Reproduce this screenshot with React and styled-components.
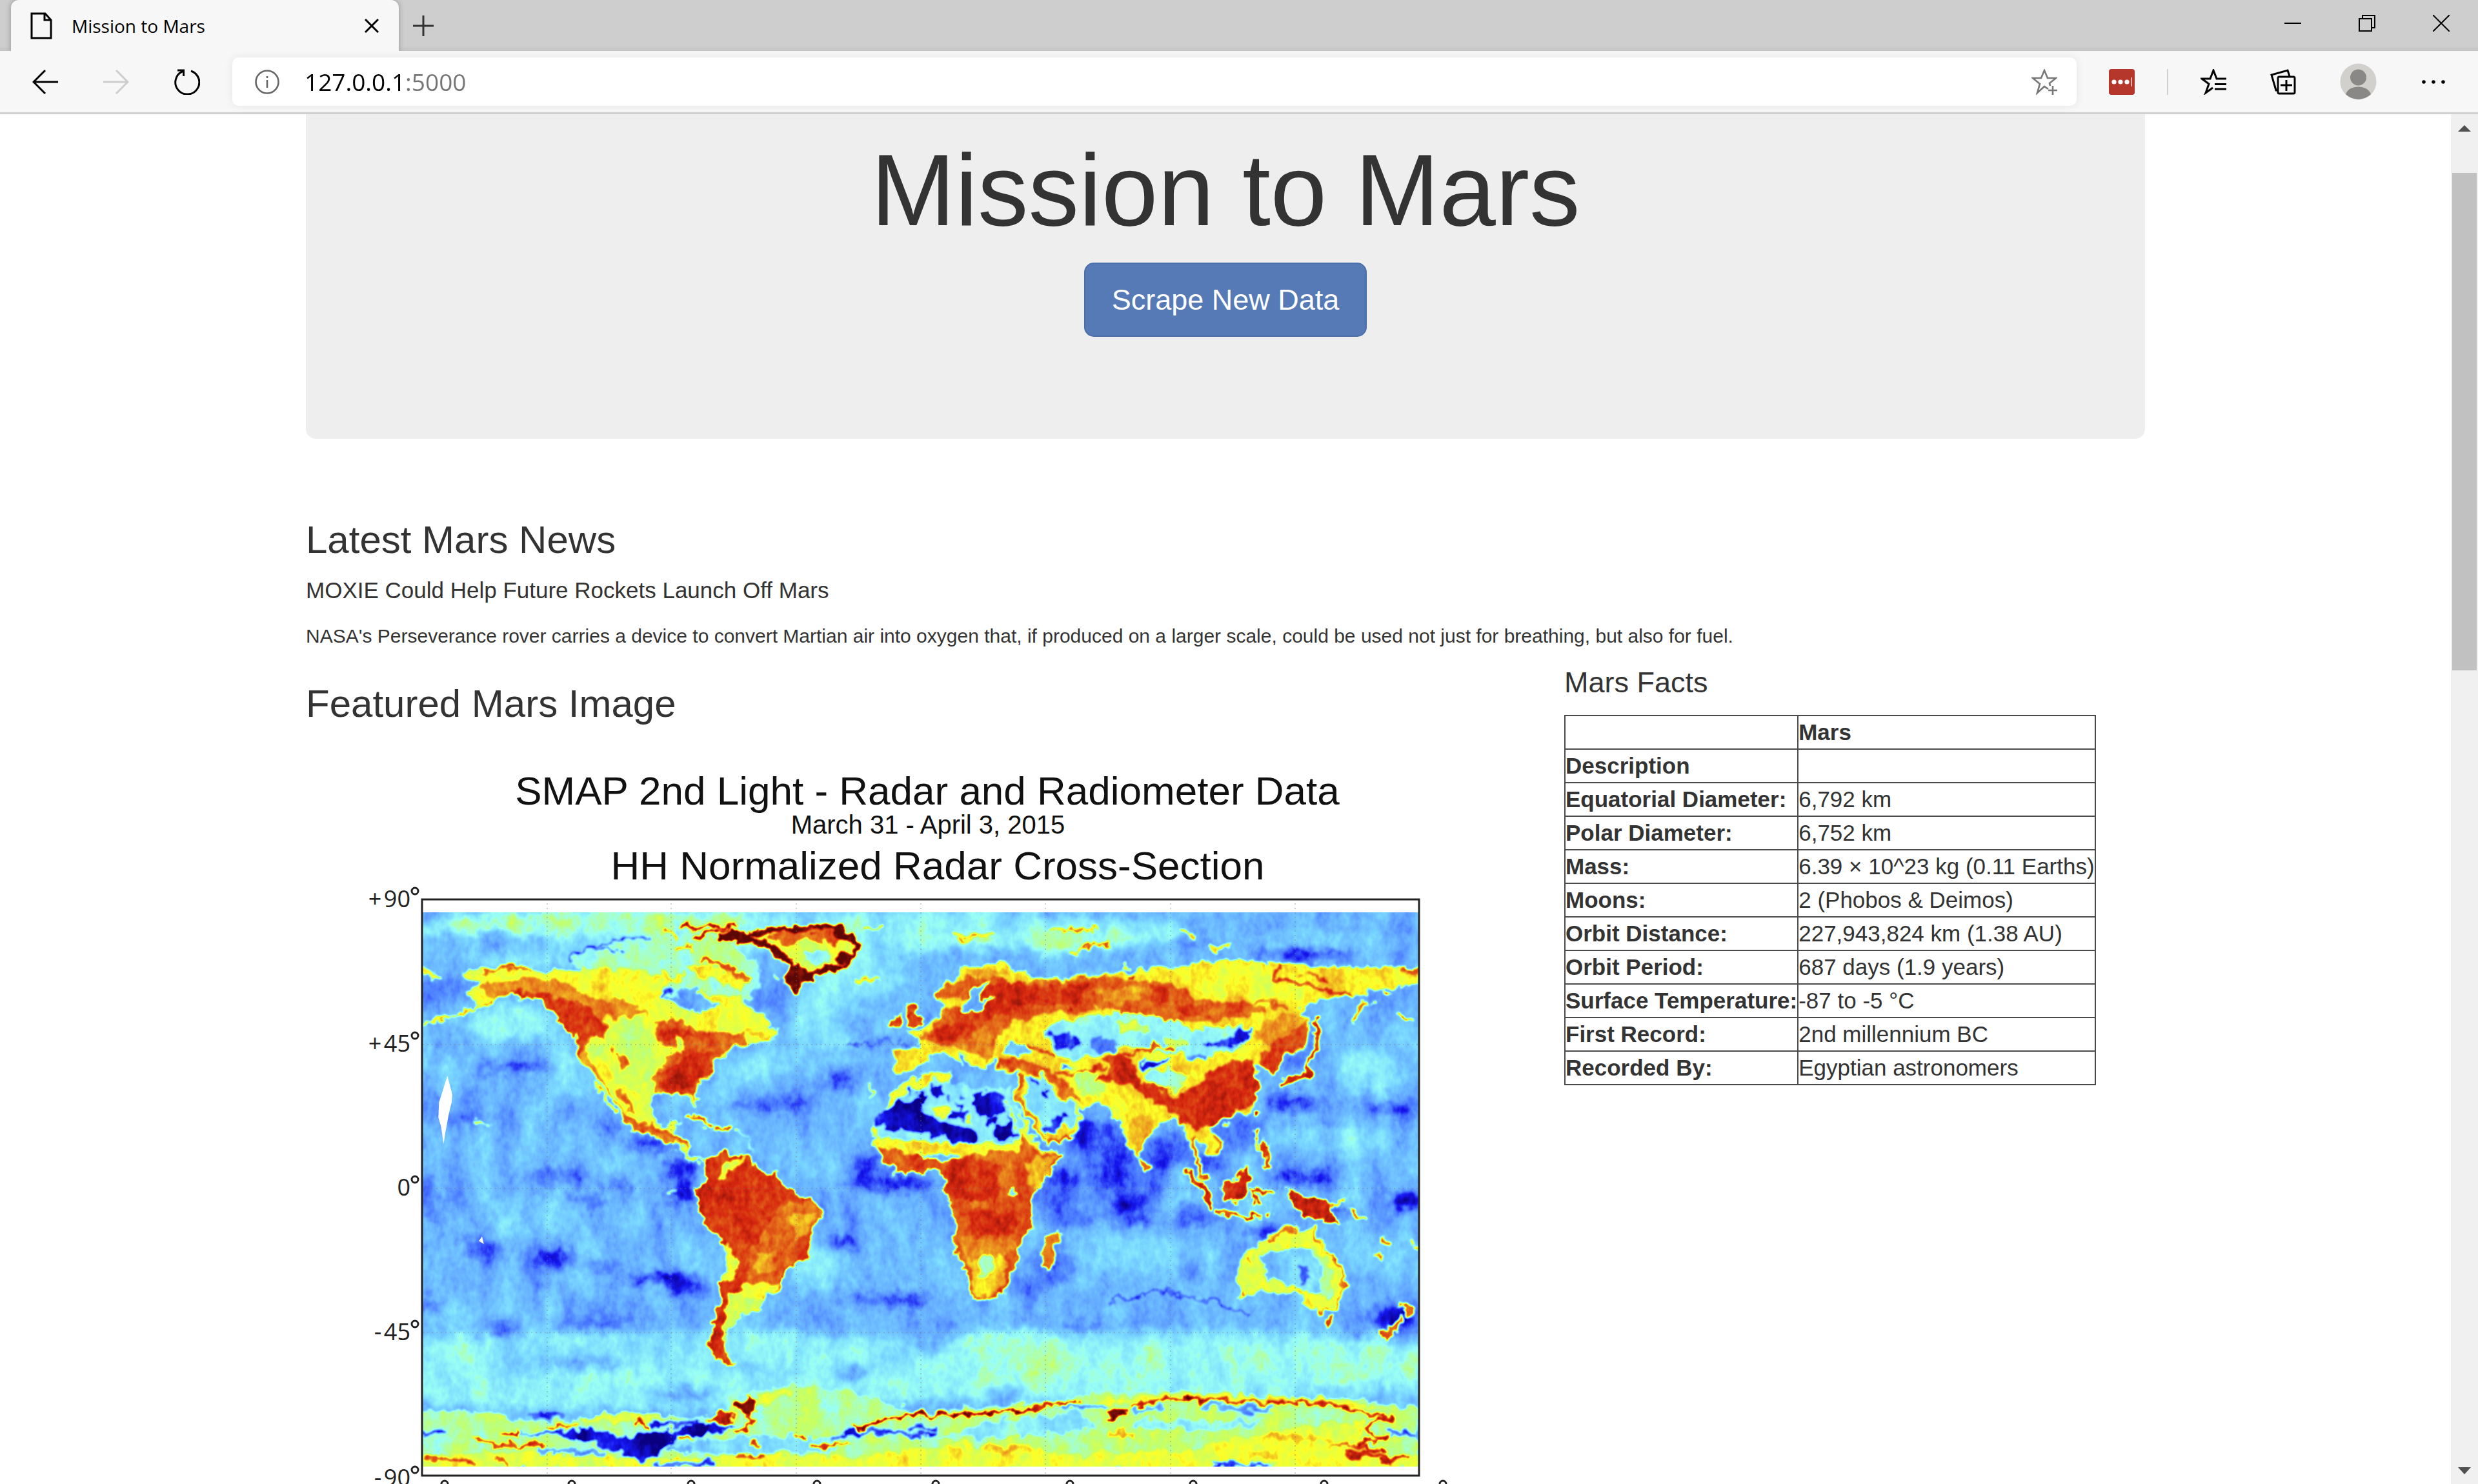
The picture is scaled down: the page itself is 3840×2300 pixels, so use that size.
import React from 'react';
import styled, { createGlobalStyle } from 'styled-components';

const GlobalStyle = createGlobalStyle`
  * { box-sizing: border-box; }
  html, body, #root { height: 100%; margin: 0; }
  body {
    font-family: "Liberation Sans", Arial, sans-serif;
    font-size: 35px;
    color: #333;
    background: #fff;
  }
  button { font: inherit; }
`;

/* ---------- browser window ---------- */

const Window = styled.div`
  display: flex;
  flex-direction: column;
  height: 100vh;
  overflow: hidden;
`;

const TabStrip = styled.div`
  display: flex;
  align-items: stretch;
  height: 79px;
  flex: none;
  padding-left: 17px;
  background: linear-gradient(#cecece 90%, #c2c2c2);
  font-family: "Open Sans", "Noto Sans", sans-serif;
`;

const Tab = styled.div`
  display: flex;
  align-items: center;
  gap: 30px;
  width: 601px;
  padding: 0 22px 0 30px;
  border-radius: 12px 12px 0 0;
  background: #f7f7f7;
  box-shadow: 0 0 8px rgba(0, 0, 0, 0.3);
  font-size: 28px;
  line-height: 40px;
  color: #000;
  clip-path: inset(0 -10px 0 -10px);
`;

const TabTitle = styled.span`
  flex: 1;
`;

const IconButton = styled.button`
  display: flex;
  align-items: center;
  justify-content: center;
  width: ${(p) => p.$width || 40}px;
  height: ${(p) => p.$height || 40}px;
  flex: none;
  padding: 0;
  border: 0;
  background: none;
  color: ${(p) => p.$color || '#000'};
`;

const NewTab = styled(IconButton)`
  align-self: center;
  margin-left: 18px;
`;

const WindowControls = styled.div`
  display: flex;
  margin-left: auto;
`;

const Toolbar = styled.div`
  display: flex;
  align-items: center;
  gap: 50px;
  height: 98px;
  flex: none;
  padding: 0 49px 0 50px;
  border-bottom: 3px solid #d0d0d0;
  background: #f7f7f7;
`;

const Navigation = styled.nav`
  display: flex;
  gap: 70px;
`;

const AddressBar = styled.div`
  display: flex;
  align-items: center;
  gap: 38px;
  flex: 1;
  height: 75px;
  padding: 0 30px 0 34px;
  border-radius: 10px;
  background: #fff;
  box-shadow: 0 0 14px rgba(0, 0, 0, 0.08);
`;

const AddressInput = styled.input`
  flex: 1;
  min-width: 0;
  height: 56px;
  padding: 0;
  border: 0;
  outline: 0;
  font-family: "Open Sans", "Noto Sans", sans-serif;
  font-size: 37px;
  color: transparent;
  background: linear-gradient(to right, #000 157px, #757575 157px);
  background-clip: text;
  -webkit-background-clip: text;
`;

const Divider = styled.span`
  width: 2px;
  height: 40px;
  background: #cfcfcf;
`;

const Tools = styled.div`
  display: flex;
  align-items: center;
  gap: 68px;
`;

const Viewport = styled.div`
  display: flex;
  flex: 1;
  min-height: 0;
`;

const Scrollbar = styled.div`
  display: flex;
  flex-direction: column;
  align-items: center;
  width: 42px;
  flex: none;
  padding: 2px;
  background: #f0f0f0;
`;

const Thumb = styled.div`
  width: 38px;
  height: calc(100% * 4 / 11);
  margin: 49px 0 auto;
  background: #c1c1c1;
`;

/* ---------- page ---------- */

const Page = styled.main`
  flex: 1;
  min-width: 0;
  overflow: hidden;
`;

const Container = styled.div`
  max-width: 2850px;
  margin: 0 auto;
`;

const Jumbotron = styled.header`
  display: flex;
  flex-direction: column;
  align-items: center;
  gap: 25px;
  margin-bottom: 124px;
  padding: 31px 150px 158px;
  border-radius: 0 0 15px 15px;
  background: #eee;
`;

const Title = styled.h1`
  margin: 0;
  font-size: 157px;
  line-height: 174px;
  font-weight: 400;
`;

const PrimaryButton = styled.button`
  padding: 25px 41px;
  border: 2px solid #4a6ea9;
  border-radius: 15px;
  background: #567ab5;
  color: #fff;
  font-size: 45px;
  line-height: 61px;
`;

const SectionTitle = styled.h2`
  margin: 0 0 25px;
  font-size: 60px;
  line-height: 66px;
  font-weight: 400;
`;

const NewsTitle = styled.h3`
  margin: 0 0 30px;
  font-size: 35px;
  line-height: 39px;
  font-weight: 400;
`;

const NewsText = styled.p`
  margin: 0;
  font-size: 30px;
  line-height: 43px;
`;

const Columns = styled.div`
  display: grid;
  grid-template-columns: 25fr 12fr;
  column-gap: 75px;
  align-items: start;
`;

const Feature = styled.section`
  padding-top: 51px;
`;

const Facts = styled.section`
  padding-top: 26px;
`;

const FactsTitle = styled.h2`
  margin: 0 0 25px;
  font-size: 45px;
  line-height: 50px;
  font-weight: 400;
`;

const FactsTable = styled.table`
  border-collapse: collapse;
  font-size: 35px;
  line-height: 50px;
  white-space: nowrap;

  th, td {
    height: 52px;
    padding: 0;
    border: 2px solid #4a4a4a;
    text-align: left;
  }
`;

const MapImage = styled.svg`
  display: block;
  width: 100%;
  height: auto;
  font-family: "Liberation Sans", Arial, sans-serif;
`;

/* ---------- icons ---------- */

const Icon = ({ w = 40, h = 40, sw = 3, children }) => (
  <svg width={w} height={h} viewBox={`0 0 ${w} ${h}`} fill="none" stroke="currentColor" strokeWidth={sw} aria-hidden="true">
    {children}
  </svg>
);

const FileIcon = () => (
  <Icon w={34} h={42}><path d="M2 2H23L32 12V40H2ZM22 2V12H32" /></Icon>
);
const CloseIcon = () => <Icon w={22} h={22}><path d="M1 1 21 21M21 1 1 21" /></Icon>;
const PlusIcon = () => <Icon w={34} h={34}><path d="M17 1V33M1 17H33" stroke="#333" /></Icon>;
const BackIcon = () => <Icon><path d="M20 2 2 20 20 38M2 20H40" /></Icon>;
const ForwardIcon = () => <Icon><path d="M20 2 38 20 20 38M38 20H0" /></Icon>;
const ReloadIcon = () => (
  <Icon><path d="M26 3A18.5 18.5 0 1 1 13 3.6M5 2H14.500V11" /></Icon>
);
const InfoIcon = () => (
  <Icon w={38} h={38} sw={2.6}><circle cx="19" cy="19" r="17.500" /><path d="M19 16V28M19 10V13" /></Icon>
);
const StarAddIcon = () => (
  <Icon sw={2.6}><path d="M26 31 20 27 9 37 13 23 2 14H15L20 2 25 14H38L28 22 29 26M33 26V40M26 33H40" /></Icon>
);
const PasswordIcon = () => (
  <svg width="40" height="40" viewBox="0 0 40 40" aria-hidden="true">
    <rect width="40" height="40" rx="4" fill="#b5362b" />
    <circle cx="8" cy="20" r="3.600" fill="#fff" /><circle cx="18" cy="20" r="3.600" fill="#fff" /><circle cx="28" cy="20" r="3.600" fill="#fff" />
    <path d="M35 13V27" stroke="#f0d5d2" strokeWidth="1.500" />
  </svg>
);
const FavoritesIcon = () => (
  <Icon><path d="M40 15H25L20 2 15 15H2L13 23 8 37 19 29M22 23.500H40M22 31H40" /></Icon>
);
const CollectionsIcon = () => (
  <Icon><path d="M12 33H9L2 9 27 2 30 11" /><rect x="12" y="12" width="26" height="26" rx="2" /><path d="M25 17V34M16 25H34" /></Icon>
);
const AvatarIcon = () => (
  <svg width="57" height="57" viewBox="0 0 57 57" aria-hidden="true">
    <circle cx="28.500" cy="28.500" r="28" fill="#d2d0cd" />
    <circle cx="28.500" cy="22" r="12.500" fill="#8a8886" />
    <path d="M9 48C12 40 20 36.500 28.500 36.500S45 40 48 48A28 28 0 0 1 9 48Z" fill="#8a8886" />
  </svg>
);
const MoreIcon = () => (
  <svg width="40" height="40" viewBox="0 0 40 40" aria-hidden="true">
    <circle cx="5" cy="20" r="2.800" /><circle cx="20" cy="20" r="2.800" /><circle cx="35" cy="20" r="2.800" />
  </svg>
);
const MinimizeIcon = () => <Icon w={26} h={26} sw={2}><path d="M0 13H26" /></Icon>;
const RestoreIcon = () => <Icon w={26} h={26} sw={2}><path d="M1 6H20V25H1ZM6 6V1H25V20H20" /></Icon>;
const WindowCloseIcon = () => <Icon w={26} h={26} sw={2}><path d="M0 0 26 26M26 0 0 26" /></Icon>;
const Arrow = ({ down }) => (
  <svg width="20" height="40" viewBox="0 0 20 40" fill="#505050" aria-hidden="true">
    <path d={down ? 'M0 16H20L10 27Z' : 'M0 25H20L10 15Z'} />
  </svg>
);

/* ---------- radar map ---------- */

/* Signal strength from 0 to 1 as a grey; the map filter turns it into colour. */
const level = (v) => {
  const c = Math.round(v * 255);
  return `rgb(${c},${c},${c})`;
};

/* Spots: [cx, cy, rx, ry, strength] */
const westSea = [
  [850, 1240, 900, 80, 0.42], [850, 1320, 900, 50, 0.47], [900, 110, 800, 60, 0.46],
  [700, 85, 480, 34, 0.56], [330, 135, 190, 22, 0.33], [480, 185, 170, 16, 0.46], [230, 270, 90, 40, 0.26],
  [1400, 180, 120, 110, 0.46], [1450, 100, 90, 40, 0.56], [1180, 290, 50, 30, 0.3], [1330, 330, 110, 90, 0.44],
  [430, 350, 120, 50, 0.48], [440, 465, 100, 14, 0.12], [620, 500, 50, 60, 0.44], [200, 400, 40, 70, 0.4],
  [190, 560, 50, 60, 0.24], [280, 605, 90, 10, 0.18], [1100, 470, 90, 40, 0.44], [1370, 500, 36, 26, 0.12],
  [1160, 565, 130, 12, 0.13], [720, 630, 24, 14, 0.13], [830, 668, 70, 14, 0.06], [910, 735, 40, 34, 0.08],
  [920, 800, 40, 26, 0.07], [720, 775, 26, 18, 0.08], [640, 820, 110, 10, 0.16], [560, 755, 80, 24, 0.2],
  [190, 810, 24, 60, 0.15], [1500, 772, 110, 24, 0.1], [1440, 730, 60, 22, 0.17], [560, 975, 70, 22, 0.12],
  [690, 995, 60, 12, 0.16], [855, 1025, 105, 14, 0.01], [930, 1050, 60, 20, 0.12], [350, 950, 50, 28, 0.2],
  [290, 920, 16, 12, 0.03], [1365, 932, 44, 20, 0.04], [1470, 1080, 90, 13, 0.14], [400, 1160, 34, 26, 0.1],
  [190, 1095, 26, 20, 0.14], [640, 1150, 110, 11, 0.16], [640, 1250, 130, 20, 0.29], [680, 1185, 140, 16, 0.47],
  [290, 1240, 120, 60, 0.5], [600, 1330, 430, 26, 0.47], [1180, 1210, 150, 50, 0.48], [1300, 1000, 60, 60, 0.42],
  [920, 1330, 100, 22, 0.28], [1420, 1270, 60, 26, 0.24], [230, 480, 30, 60, 0.44], [480, 860, 120, 60, 0.38],
];

const eastSea = [
  [740, 1240, 850, 80, 0.46], [740, 1310, 850, 40, 0.48], [300, 110, 600, 60, 0.45],
  [200, 90, 180, 34, 0.46], [520, 128, 280, 22, 0.53], [640, 64, 220, 7, 0.28], [1050, 85, 200, 14, 0.3],
  [1350, 100, 160, 24, 0.3], [1190, 168, 120, 14, 0.06], [900, 140, 60, 10, 0.22], [1300, 130, 130, 14, 0.38],
  [400, 165, 150, 13, 0.32], [60, 230, 80, 60, 0.46], [120, 404, 60, 8, 0.08], [30, 360, 40, 40, 0.3],
  [1360, 480, 90, 60, 0.44], [1160, 560, 54, 26, 0.06], [1410, 578, 70, 14, 0.13], [1170, 450, 34, 24, 0.22],
  [1270, 660, 160, 36, 0.41], [660, 760, 190, 120, 0.22], [650, 650, 70, 46, 0.12], [700, 740, 28, 60, 0],
  [590, 760, 30, 28, 0.02], [740, 830, 46, 24, 0.05], [840, 690, 50, 50, 0.1], [765, 870, 18, 26, 0.05],
  [900, 860, 46, 34, 0.1], [620, 870, 60, 20, 0.15], [1020, 640, 60, 50, 0.18], [940, 720, 24, 26, 0.06],
  [1190, 760, 80, 20, 0.1], [1450, 820, 40, 20, 0.02], [1280, 850, 40, 16, 0.05], [130, 770, 120, 20, 0.1],
  [1090, 900, 50, 18, 0.06], [760, 960, 160, 50, 0.4], [560, 1000, 50, 40, 0.2], [1340, 950, 60, 60, 0.38],
  [170, 1085, 60, 16, 0.1], [480, 1050, 60, 26, 0.24], [620, 1160, 100, 13, 0.22], [1420, 1130, 60, 36, 0.12],
  [250, 1180, 60, 60, 0.26], [40, 1270, 30, 28, 0.18], [420, 1240, 170, 80, 0.52], [900, 1250, 330, 60, 0.49],
  [1300, 1250, 220, 60, 0.51], [430, 1330, 60, 14, 0.3], [1320, 1320, 160, 10, 0.35],
];

/* Land outlines: [strength, path, stroke width]; with a width the path is drawn as a line. */
const westLand = [
  [0.54, 'M590 190 640 150 740 130 860 112 960 120 1040 140 1130 190 1145 240 1100 300 850 280 640 230Z'],
  [0.68, 'M310 265 335 240 285 214 420 203 520 212 640 215 700 200 820 215 880 230 860 280 900 300 980 320 1040 290 1090 270 1105 300 1150 335 1190 380 1150 395 1060 425 1010 450 990 490 950 530 962 570 945 570 930 535 840 540 825 580 835 610 870 628 885 605 908 605 905 650 935 660 935 695 965 712 985 712 960 726 920 700 900 670 830 650 765 620 740 580 725 545 690 500 640 460 615 430 612 380 545 330 505 290 440 272 380 290 340 300 310 290Z'],
  [0.78, 'M175 352 270 332 350 300 400 280', 7],
  [0.8, 'M330 250 440 235 570 238 620 260 660 285 740 290 820 330 770 335 700 335 700 390 655 385 640 425 690 500 740 575 780 610 840 630 905 650 935 665 940 700 900 670 830 650 765 620 690 520 615 430 612 380 545 330 500 285 440 268 380 290Z'],
  [0.89, 'M400 272 500 268 600 290 640 300 680 330 700 390 650 385 625 440 612 380 545 330 500 285Z'],
  [0.62, 'M700 345 790 335 835 390 835 480 790 540 730 500 690 450 650 420 700 400Z'],
  [0.85, 'M830 350 910 338 960 370 1080 378 1110 400 1030 430 1000 470 950 530 962 570 942 540 840 536 830 490 870 450 890 420 850 400Z'],
  [0.9, 'M850 480 900 460 940 430 1010 430 990 480 950 520 850 525ZM850 370 930 365 950 385 870 400Z'],
  [0.64, 'M890 390 930 400 920 430 895 420Z'],
  [0.85, 'M735 435 765 440 765 480 740 480ZM710 410 725 415 722 440Z'],
  [0.84, 'M740 530 775 590', 12],
  [0.86, 'M760 600 800 628 870 640 930 665', 12],
  [0.78, 'M665 505 728 595', 8],
  [0.3, 'M900 262 960 265 990 290 960 320 915 305Z'],
  [0.12, 'M855 285 890 257', 10],
  [0.72, 'M920 200 1000 195 1100 240 1080 260 980 230ZM830 225 930 220 920 245ZM960 270 1060 280 1050 310ZM690 215 760 225'],
  [0.86, 'M975 180 1030 195 1060 218 1105 235', 12],
  [0.83, 'M890 150 950 155M860 110 895 122', 9],
  [0.15, 'M590 185 630 155 740 130 820 125M660 152 740 158', 7],
  [0.84, 'M350 218 430 205 490 206', 8],
  [0.74, 'M172 212 230 235M1410 238 1480 238M1090 375 1180 385', 12],
  [0.96, 'M910 100 1070 93M950 125 1060 103', 10],
  [0.64, 'M1020 125 1130 105 1280 90 1380 95 1415 120 1400 200 1290 230 1250 272 1215 250 1215 200 1160 150Z'],
  [0.48, 'M1260 170 1330 155 1335 200 1300 200Z'],
  [0.84, 'M1150 125 1270 95 1380 100 1360 150 1290 130 1220 145Z'],
  [1, 'M1035 126 1130 110 1280 96 1370 98 1400 120 1415 150 1385 195 1330 210 1290 225 1240 262 1235 225 1225 190 1165 148 1110 128Z', 16],
  [1, 'M1215 200 1250 190 1290 222 1245 275 1220 250ZM1340 98 1412 110 1400 140 1370 130ZM1350 170 1410 160 1390 205Z'],
  [0.76, 'M1440 100 1490 98M1180 220 1200 240', 9],
  [0.84, 'M928 596 970 602 1008 618M1012 628 1050 630M975 632 985 632M1065 632 1080 634', 9],
  [0.58, 'M1085 632 1105 645 1115 690', 4],
  [0.7, 'M330 602 345 606 370 625M870 795 890 795M1455 512 1460 545', 7],
  [0.89, 'M985 710 1045 685 1060 700 1110 705 1140 738 1190 745 1205 790 1290 815 1322 850 1290 900 1275 970 1220 1000 1190 1060 1150 1080 1140 1110 1090 1115 1075 1140 1045 1160 1040 1200 1035 1225 1075 1250 1040 1255 1005 1235 998 1190 1020 1120 1040 1030 1045 940 1000 905 975 860 958 820 960 790 985 760Z'],
  [0.84, 'M1200 830 1290 825 1318 850 1290 900 1272 965 1215 995 1190 1040 1100 1040 1110 960 1150 900Z'],
  [0.77, 'M1225 860 1300 850 1280 900 1240 920ZM1130 960 1190 950 1180 1000 1130 1010Z'],
  [0.66, 'M1015 760 1040 720 1100 708 1080 730 1050 740 1030 765ZM1110 750 1130 765'],
  [0.6, 'M1060 1060 1150 1075 1140 1105 1090 1115 1075 1140 1045 1160 1040 1210 1030 1180 1045 1100Z'],
  [0.68, 'M1045 930 1070 960 1075 1010 1042 1040ZM1085 1040 1190 1040 1180 1070 1090 1080Z'],
  [0.89, 'M1035 1040 1022 1120 1008 1190 1012 1232 1040 1248 1075 1250', 13],
  [0.56, 'M170 1375 300 1372 430 1398 600 1400 760 1382 860 1385 960 1395 1060 1370 1080 1340 1200 1308 1400 1325 1568 1372V1530H170Z'],
  [0.67, 'M170 1495 500 1480 800 1500 1200 1490 1568 1500V1530H170ZM660 1385 850 1382 880 1398 620 1405ZM1100 1345 1210 1312 1240 1322 1130 1370Z'],
  [0.42, 'M850 1460 1100 1445 1400 1440 1568 1450 1400 1480 1000 1490Z'],
  [0.06, 'M450 1436 620 1424 780 1440 960 1418 1080 1408 1000 1436 900 1450 850 1490 800 1518 740 1485 620 1450Z'],
  [0.14, 'M172 1430 240 1434M470 1387 580 1388M1340 1446 1450 1438 1568 1434M820 1410 960 1412M840 1518 1010 1512', 13],
  [0.28, 'M500 1478 700 1490M880 1475 950 1480', 12],
  [0.88, 'M320 1448 400 1465 520 1465M175 1502 320 1508M380 1503 420 1515M1060 1494 1150 1494M1280 1468 1410 1464M1240 1448 1270 1450', 10],
  [0.86, 'M530 1420 620 1412M900 1448 940 1450M1110 1460 1140 1462', 8],
  [0.95, 'M405 1440 455 1435M785 1400 820 1418M790 1418 810 1402', 9],
  [0.92, 'M985 1405 1020 1375 1075 1385 1050 1408Z'],
  [1, 'M1065 1360 1105 1334 1126 1350 1120 1382 1092 1378Z'],
  [0.92, 'M1110 1380 1112 1415 1070 1432', 12],
  [0.97, 'M1410 1426 1460 1410 1500 1394 1568 1388', 9],
];

const eastLand = [
  [0.72, 'M140 470 145 422 200 420 205 390 180 380 225 355 265 335 270 300 250 290 245 265 290 235 320 205 410 190 470 215 500 235 650 222 740 218 840 200 1000 183 1110 190 1250 200 1484 210 1484 245 1400 262 1320 278 1220 290 1180 320 1210 345 1190 415 1120 450 1115 490 1080 460 1045 445 1060 500 1070 550 1050 590 1000 600 950 622 980 660 975 700 950 706 925 675 908 655 940 760 925 765 905 700 882 620 850 600 810 620 780 660 765 715 735 670 725 600 700 605 680 570 610 565 625 600 600 640 530 675 510 650 460 560 450 530 465 480 400 475 395 445 370 475 340 460 300 420 320 465 290 440 240 425 205 470 150 478Z'],
  [0.84, 'M205 390 260 340 270 312 330 315 350 285 250 285 245 268 320 228 390 228 440 245 640 228 780 240 850 245 920 290 1050 298 1100 320 980 345 870 350 800 330 700 312 560 322 450 345 400 390 398 420 380 460 330 420 260 410Z'],
  [0.885, 'M380 250 430 240 520 255 640 245 620 300 480 305 400 330 340 370 350 400 260 400 230 380 330 330ZM790 250 850 262 840 300 800 290ZM860 300 940 305 960 335 880 330Z'],
  [0.78, 'M650 260 770 255 780 290 700 300ZM330 215 400 205 440 225 380 235Z'],
  [0.3, 'M338 268 380 240 362 285 400 288 345 318 310 322Z'],
  [0.69, 'M860 205 1000 190 1110 200 1200 240 1180 290 960 280 880 250Z'],
  [0.79, 'M1090 340 1180 320 1200 345 1150 400 1100 420 1060 380Z'],
  [0.85, 'M980 330 1030 305 1080 290 1140 310', 8],
  [0.88, 'M1122 195 1112 235 1180 246 1250 265 1320 275M1190 215 1250 240M1395 265 1410 280M1440 215 1484 216', 10],
  [0.48, 'M520 370 620 330 740 320 860 345 900 370 1030 360 1050 400 960 440 820 430 720 410 640 440 560 440Z'],
  [0.64, 'M700 350 780 345 800 370 720 375ZM830 390 880 385 900 410 850 415Z'],
  [0.13, 'M530 380 590 375 620 410 600 430 560 415ZM935 405 990 390 1050 362 1048 395 1010 412 950 415ZM765 458 840 445 815 468 775 470ZM560 460 595 462 580 475Z'],
  [0.25, 'M640 390 720 400 700 430 650 425ZM890 430 940 435 925 450 890 445Z'],
  [0.36, 'M410 430 440 400 495 425 450 438Z'],
  [0.85, 'M400 450 460 440 500 455 560 490 620 560 580 550 530 490 470 475 400 470Z'],
  [0.88, 'M470 410 520 425 550 440M700 440 800 415 860 420M560 485 680 470', 10],
  [0.6, 'M600 480 660 480 680 540 620 540Z'],
  [0.895, 'M655 500 690 475 680 450 720 432 745 450 760 490 850 545 900 525 960 470 1060 438 1072 550 1000 600 940 625 905 640 870 600 835 570 780 545 740 510 700 510Z'],
  [0.5, 'M780 480 850 475 895 490 860 530 800 520Z'],
  [0.77, 'M730 590 810 600 770 700 745 660Z'],
  [0.87, 'M1075 455 1120 385 1170 370 1205 340 1190 410 1130 440 1125 490 1105 480Z'],
  [0.9, 'M1222 335 1222 420 1205 440 1202 488 1140 500 1135 518', 13],
  [0.96, 'M1072 578 1066 596M1012 592 1018 590M1133 510 1135 518', 10],
  [0.86, 'M905 650 912 700 938 760M958 640 975 690M535 672 600 645M468 490 458 525', 10],
  [0.82, 'M460 540 520 655M1320 350 1330 310 1360 290M985 620 990 628', 13],
  [0.9, 'M888 742 930 790 960 838', 17],
  [0.88, 'M960 848 1010 855 1085 865M1055 790 1110 795M1060 830 1065 800 1080 830M1068 632 1072 680M1085 660 1100 730 1080 725M1100 860 1110 855', 10],
  [0.91, 'M978 782 1048 733 1042 815 1010 824 981 807Z'],
  [0.91, 'M1140 793 1180 801 1250 820 1256 850 1280 878 1213 868 1180 854 1164 824Z'],
  [0.82, 'M1255 836 1295 822M1305 840 1355 875', 9],
  [0.82, 'M775 710 788 735M1385 910 1402 940M1375 960 1390 972M1465 935 1478 940', 13],
  [0.87, 'M175 300 192 298 219 350 178 364 183 330ZM134 334 164 322 162 354 134 354Z'],
  [0.95, 'M190 320 200 322M725 320 732 324M745 230 755 231M585 306 590 307M1430 325 1460 342', 9],
  [0.7, 'M140 530 190 495 280 480 285 500 330 540 440 530 470 600 520 690 570 685 540 750 495 800 300 700 100 690 90 620Z'],
  [0.46, 'M110 590 160 545 250 500 340 520 440 520 470 620 460 665 200 665 95 650Z'],
  [0.04, 'M100 590 160 560 215 545 220 590 250 610 240 635 140 635 95 620ZM240 510 270 520 260 545 240 540ZM340 560 350 535 390 528 420 550 420 590 380 600ZM235 605 300 620 355 640 350 670 280 660 230 640ZM400 620 440 610 460 650 400 655ZM300 560 320 570 310 590ZM200 530 225 540 205 550ZM280 580 330 590 320 605 280 600ZM370 600 400 600 400 620 375 622Z'],
  [0.13, 'M270 540 285 550 275 562ZM430 590 445 600 436 612ZM180 525 195 520 190 540ZM320 530 330 545 318 550Z'],
  [0.68, 'M240 570 290 575 280 600 250 600ZM325 600 345 600 340 620M420 545 450 600 460 640'],
  [0.85, 'M85 672 180 690 270 715 390 690 460 690 470 640 515 700 570 688 540 750 495 800 490 900 460 950 455 990 430 1050 400 1078 340 1080 320 1000 300 950 300 880 275 800 270 750 240 740 150 747 115 720Z'],
  [0.89, 'M275 725 340 705 415 730 410 800 400 830 300 820 278 800ZM320 860 400 850 470 870 440 915 340 905Z'],
  [0.75, 'M480 720 555 695 530 760 495 790ZM330 970 400 960 430 985 420 1040 390 1070 345 1070Z'],
  [0.72, 'M85 664 200 672 300 680 460 672', 12],
  [0.81, 'M310 920 450 920 455 950 400 965 320 980ZM330 820 390 815 395 840 340 845Z'],
  [0.56, 'M365 965 390 960 395 1010 360 1020Z'],
  [0.4, 'M435 795 450 798', 9],
  [0.84, 'M516 950 562 893 550 992 524 1002Z'],
  [0.44, 'M475 490 520 490 560 540 590 560 615 600 560 640 530 640 480 560Z'],
  [0.06, 'M530 620 560 590 590 595 575 630 530 645ZM490 490 505 510 495 520ZM520 530 545 535 540 550Z'],
  [0.68, 'M1070 942 1100 908 1150 885 1190 905 1215 882 1245 950 1292 1005 1292 1060 1270 1112 1210 1108 1170 1070 1100 1060 1030 1080 1015 1000 1030 965Z'],
  [0.38, 'M1075 960 1160 945 1220 960 1250 1010 1235 1070 1190 1060 1140 1030 1095 1035 1090 990Z'],
  [0.1, 'M1172 985 1200 990 1212 1030 1185 1045Z'],
  [0.56, 'M1200 940 1250 970 1265 1060 1235 1080 1230 1000Z'],
  [0.83, 'M1095 925 1150 900 1175 895M1216 885 1225 935M1250 955 1290 1005 1290 1060 1265 1108 1225 1110M1040 975 1040 990M1030 1060 1040 1078', 9],
  [0.87, 'M1236 1130 1260 1130 1250 1154ZM1434 1078 1476 1112 1445 1130ZM1432 1126 1448 1140 1402 1186 1382 1174Z'],
  [0.17, 'M690 1085 740 1080 840 1055 900 1078 980 1088 1040 1115', 9],
  [0.15, 'M20 406 120 402 180 408', 6],
  [0.8, 'M290 118 400 115M305 130 340 128M530 106 660 104M870 106 910 118', 8],
  [0.84, 'M610 160 650 148 690 142', 8],
  [0.74, 'M585 175 605 160M725 185 732 210M40 238 110 238M940 148 1000 152', 11],
  [0.58, 'M0 1330 120 1385 560 1352 600 1335 880 1322 1100 1338 1300 1342 1484 1368V1530H0Z'],
  [0.68, 'M860 1480 1000 1450 1110 1430 1230 1410 1340 1400 1340 1480 1484 1500V1530H0V1500L300 1465 480 1465 560 1490ZM620 1350 900 1325 1100 1338 1300 1345 1400 1372 1100 1355Z'],
  [0.45, 'M400 1400 620 1380 660 1420 500 1440 250 1450ZM750 1400 1100 1400 1000 1425 760 1425Z'],
  [0.14, 'M0 1436 100 1430 250 1438M180 1415 250 1422M1400 1432 1484 1434M960 1520 1100 1518', 12],
  [0.27, 'M570 1365 680 1362M750 1375 830 1368M930 1362 1110 1372M1020 1378 1060 1385', 11],
  [0.75, 'M370 1475 490 1480M690 1435 760 1440M1090 1440 1260 1450M1060 1490 1120 1490', 14],
  [1, 'M40 1422 90 1412 120 1394 210 1386 330 1382 450 1376 490 1372', 9],
  [0.92, 'M490 1372 560 1356 610 1348M740 1368 800 1352 880 1345 930 1348 1100 1354 1220 1354 1290 1366 1350 1385', 9],
  [1, 'M675 1385 705 1370 740 1372 720 1388 695 1412ZM880 1335 915 1338 920 1350 880 1348Z'],
  [0.93, 'M1350 1385 1412 1394 1360 1412 1345 1430 1390 1446 1310 1468 1400 1480 1300 1490 1450 1500 1380 1508', 9],
  [0.87, 'M1250 1470 1340 1468M0 1468 30 1462', 8],
];

const Spot = ({ spot: [cx, cy, rx, ry, v] }) => (
  <ellipse cx={cx} cy={cy} rx={rx} ry={ry} fill={level(v)} />
);

const Land = ({ shape: [v, d, width] }) =>
  width ? (
    <path d={d} fill="none" stroke={level(v)} strokeWidth={width} strokeLinejoin="round" />
  ) : (
    <path d={d} fill={level(v)} />
  );

const WEST = 'translate(560 1380) scale(.5421 .5867)';
const EAST = 'translate(1300 1380) scale(.6059 .5867)';
const latitudes = [['+\u200a90', 1402], ['+\u200a45', 1626], ['0', 1849], ['-\u200a45', 2073], ['-\u200a90', 2299]];
const longitudes = [689, 886, 1071, 1266, 1450, 1658, 1849, 2052, 2236];
const meridians = [848, 1040, 1234, 1427, 1620, 1814, 2007];

const RadarMap = () => (
  <MapImage viewBox="474 1149 1875 1230" role="img" aria-label="SMAP radar map">
    <defs>
      <clipPath id="map-area"><rect x="655" y="1414" width="1543" height="859" /></clipPath>
      <filter id="haze" x="-20%" y="-20%" width="140%" height="140%"><feGaussianBlur stdDeviation="13 7" /></filter>
      <filter id="jet" filterUnits="userSpaceOnUse" x="640" y="1400" width="1580" height="890" colorInterpolationFilters="sRGB">
        <feTurbulence type="fractalNoise" baseFrequency="0.055" numOctaves="4" seed="8" result="edge" />
        <feDisplacementMap in="SourceGraphic" in2="edge" scale="24" xChannelSelector="R" yChannelSelector="G" result="rough" />
        <feGaussianBlur in="rough" stdDeviation="1.500" result="field" />
        <feTurbulence type="fractalNoise" baseFrequency="0.026 0.012" numOctaves="5" seed="21" />
        <feColorMatrix values="1 0 0 0 0  1 0 0 0 0  1 0 0 0 0  0 0 0 0 1" result="swell" />
        <feTurbulence type="fractalNoise" baseFrequency="0.110 0.080" numOctaves="2" seed="5" />
        <feColorMatrix values="1 0 0 0 0  1 0 0 0 0  1 0 0 0 0  0 0 0 0 1" result="grain" />
        <feComposite in="field" in2="swell" operator="arithmetic" k1="-0.260" k2="1.130" k3="0.360" k4="-0.180" result="wavy" />
        <feComposite in="wavy" in2="grain" operator="arithmetic" k2="1" k3="0.100" k4="-0.050" />
        <feComponentTransfer>
          <feFuncR type="table" tableValues=".04 .08 .28 .4 .48 .6 .76 .99 .92 .84 .36" />
          <feFuncG type="table" tableValues="0 .08 .46 .68 .85 1 1 1 .56 .15 .03" />
          <feFuncB type="table" tableValues=".5 .93 1 1 1 .96 .42 .15 .12 .06 .02" />
          <feFuncA type="linear" slope="1" />
        </feComponentTransfer>
      </filter>
    </defs>

    <g textAnchor="middle" fill="#111">
      <text x="1437" y="1247" fontSize="62">SMAP 2nd Light - Radar and Radiometer Data</text>
      <text x="1438" y="1292" fontSize="40">March 31 - April 3, 2015</text>
      <text x="1453" y="1363" fontSize="62">HH Normalized Radar Cross-Section</text>
    </g>

    <g clipPath="url(#map-area)">
      <g filter="url(#jet)">
        <rect x="600" y="1360" width="1640" height="960" fill={level(0.33)} />
        <g filter="url(#haze)">
          <g transform={WEST}>{westSea.map((s, i) => <Spot key={i} spot={s} />)}</g>
          <g transform={EAST}>{eastSea.map((s, i) => <Spot key={i} spot={s} />)}</g>
        </g>
        <g transform={WEST}>{westLand.map((s, i) => <Land key={i} shape={s} />)}</g>
        <g transform={EAST}>{eastLand.map((s, i) => <Land key={i} shape={s} />)}</g>
      </g>
      <g transform={WEST} fill="#fff">
        <path d="M246 490 260 540 258 560 250 590 240 640 235 670 228 625 220 600 222 560ZM345 914 350 934 336 926Z" />
      </g>
    </g>

    <g stroke="#777" strokeOpacity="0.45" strokeDasharray="2 5" strokeWidth="1.500">
      {meridians.map((x) => <path key={x} d={`M${x} 1400V2286`} />)}
      <path d="M655 1619H2198M655 1842H2198M655 2065H2198" />
    </g>
    <rect x="654" y="1394" width="1545" height="893" fill="none" stroke="#222" strokeWidth="3" />

    <g fill="#222" fontFamily="'Open Sans', 'Noto Sans', sans-serif" fontSize="36" textAnchor="end">
      {latitudes.map(([label, y]) => <text key={label} x="636" y={y + 4}>{label}</text>)}
    </g>
    <g fill="none" stroke="#222" strokeWidth="3">
      {latitudes.map(([label, y]) => <circle key={label} cx="643" cy={y - 21} r="5" />)}
      {longitudes.map((x) => <circle key={x} cx={x} cy="2300" r="5" />)}
    </g>
  </MapImage>
);

/* ---------- content ---------- */

const facts = [
  ['Equatorial Diameter:', '6,792 km'],
  ['Polar Diameter:', '6,752 km'],
  ['Mass:', '6.39 × 10^23 kg (0.11 Earths)'],
  ['Moons:', '2 (Phobos & Deimos)'],
  ['Orbit Distance:', '227,943,824 km (1.38 AU)'],
  ['Orbit Period:', '687 days (1.9 years)'],
  ['Surface Temperature:', '-87 to -5 °C'],
  ['First Record:', '2nd millennium BC'],
  ['Recorded By:', 'Egyptian astronomers'],
];

export default function App() {
  return (
    <Window>
      <GlobalStyle />
      <TabStrip>
        <Tab>
          <FileIcon />
          <TabTitle>Mission to Mars</TabTitle>
          <IconButton aria-label="Close tab"><CloseIcon /></IconButton>
        </Tab>
        <NewTab aria-label="New tab"><PlusIcon /></NewTab>
        <WindowControls>
          <IconButton $width={115} $height={71} aria-label="Minimize"><MinimizeIcon /></IconButton>
          <IconButton $width={115} $height={71} aria-label="Restore"><RestoreIcon /></IconButton>
          <IconButton $width={115} $height={71} aria-label="Close window"><WindowCloseIcon /></IconButton>
        </WindowControls>
      </TabStrip>

      <Toolbar>
        <Navigation aria-label="History">
          <IconButton aria-label="Back"><BackIcon /></IconButton>
          <IconButton $color="#cdcdcd" aria-label="Forward"><ForwardIcon /></IconButton>
          <IconButton aria-label="Refresh"><ReloadIcon /></IconButton>
        </Navigation>
        <AddressBar>
          <IconButton $color="#666" aria-label="Site information"><InfoIcon /></IconButton>
          <AddressInput aria-label="Address" defaultValue="127.0.0.1:5000" />
          <IconButton $color="#777" aria-label="Add to favorites"><StarAddIcon /></IconButton>
        </AddressBar>
        <IconButton aria-label="Password manager"><PasswordIcon /></IconButton>
        <Divider />
        <Tools>
          <IconButton aria-label="Favorites"><FavoritesIcon /></IconButton>
          <IconButton aria-label="Collections"><CollectionsIcon /></IconButton>
          <IconButton $width={57} $height={57} aria-label="Profile"><AvatarIcon /></IconButton>
          <IconButton aria-label="More"><MoreIcon /></IconButton>
        </Tools>
      </Toolbar>

      <Viewport>
        <Page>
          <Container>
            <Jumbotron>
              <Title>Mission to Mars</Title>
              <PrimaryButton>Scrape New Data</PrimaryButton>
            </Jumbotron>

            <section>
              <SectionTitle>Latest Mars News</SectionTitle>
              <NewsTitle>MOXIE Could Help Future Rockets Launch Off Mars</NewsTitle>
              <NewsText>
                NASA's Perseverance rover carries a device to convert Martian air into oxygen that, if produced on a larger scale, could be used not just for breathing, but also for fuel.
              </NewsText>
            </section>

            <Columns>
              <Feature>
                <SectionTitle>Featured Mars Image</SectionTitle>
                <RadarMap />
              </Feature>
              <Facts>
                <FactsTitle>Mars Facts</FactsTitle>
                <FactsTable>
                  <thead>
                    <tr><th></th><th>Mars</th></tr>
                    <tr><th>Description</th><th></th></tr>
                  </thead>
                  <tbody>
                    {facts.map(([name, value]) => (
                      <tr key={name}><th>{name}</th><td>{value}</td></tr>
                    ))}
                  </tbody>
                </FactsTable>
              </Facts>
            </Columns>
          </Container>
        </Page>
        <Scrollbar>
          <Arrow />
          <Thumb />
          <Arrow down />
        </Scrollbar>
      </Viewport>
    </Window>
  );
}
